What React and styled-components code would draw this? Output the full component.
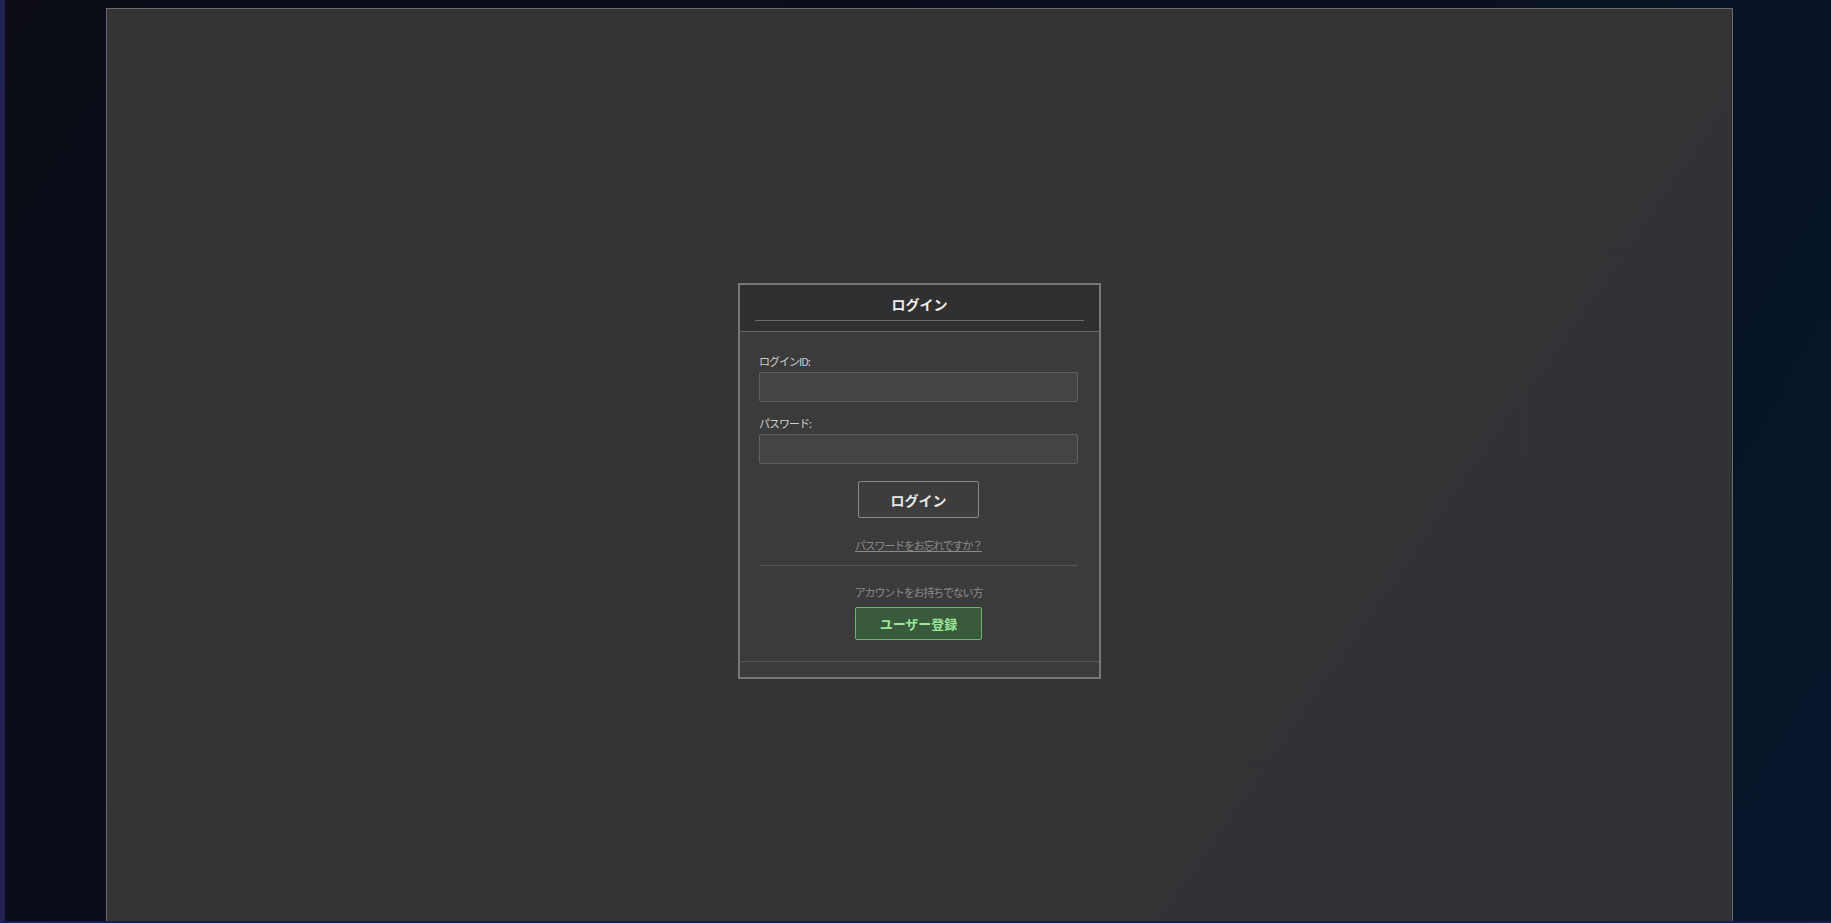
import React, {useState} from 'react';
import styled, {createGlobalStyle} from 'styled-components';

const GlobalStyle = createGlobalStyle`
    html, body {
        margin: 0;
        padding: 0;
        height: 100%;
    }
    body {
        font-family: "Noto Sans CJK JP", "Noto Sans", sans-serif;
        background: #0b0c16;
    }
    #root {
        height: 100%;
    }
`;

const Screen = styled.div`
    box-sizing: border-box;
    height: 923px;
    border-left: 5px solid #212156;
    border-bottom: 2px solid #1c1c4c;
    background: linear-gradient(120deg, #0b0c16 0%, #0a0f1e 50%, #06172b 100%);
    padding: 8px 0 0 101px;
    display: flex;
`;

const Panel = styled.main`
    box-sizing: border-box;
    width: 1627px;
    height: 913px;
    border: 1px solid #6a6a6a;
    border-bottom: none;
    background: linear-gradient(125deg, #343434 0%, #333333 45%, #303236 100%);
    display: flex;
    align-items: center;
    justify-content: center;
    padding-top: 32px;
`;

const Card = styled.section`
    width: 359px;
    border: 2px solid #777777;
    background: #3b3b3b;
    display: flex;
    flex-direction: column;
`;

const Header = styled.header`
    background: #303030;
    border-bottom: 1px solid #666666;
    padding: 0 15px 10px;
`;

const Title = styled.h1`
    margin: 0;
    height: 36px;
    box-sizing: border-box;
    padding-top: 9px;
    font-size: 14px;
    line-height: 20px;
    font-weight: bold;
    text-align: center;
    color: #eeeeee;
    border-bottom: 1px solid #6a6a6a;
`;

const Body = styled.form`
    padding: 21px 21px 21px 19px;
    display: flex;
    flex-direction: column;
`;

const Label = styled.label`
    font-size: 11px;
    line-height: 16px;
    color: #cfcfcf;
    margin-bottom: 3px;
    margin-top: ${p => p.$first ? '0' : '13px'};
    letter-spacing: -1px;
`;

const Input = styled.input`
    box-sizing: border-box;
    height: 30px;
    width: 100%;
    background: #444444;
    border: 1px solid #5f5f5f;
    border-radius: 2px;
    color: #eeeeee;
    padding: 4px 8px;
    font-size: 13px;
    outline: none;
`;

const Center = styled.div`
    display: flex;
    flex-direction: column;
    align-items: center;
`;

const Button = styled.button`
    box-sizing: border-box;
    font-family: inherit;
    font-weight: bold;
    cursor: pointer;
    border-radius: 2px;
    width: ${p => p.$register ? '127px' : '121px'};
    height: ${p => p.$register ? '33px' : '37px'};
    margin-top: ${p => p.$register ? '7px' : '17px'};
    font-size: ${p => p.$register ? '13px' : '14px'};
    background: ${p => p.$register ? '#3b5a3d' : '#3d3d3d'};
    border: 1px solid ${p => p.$register ? '#6db36d' : '#8a8a8a'};
    color: ${p => p.$register ? '#98e898' : '#e8e8e8'};
`;

const Forgot = styled.a`
    margin-top: 19px;
    font-size: 11px;
    line-height: 16px;
    color: #8a8a8a;
    text-decoration: underline;
    letter-spacing: -1.2px;
    cursor: pointer;
`;

const Divider = styled.hr`
    width: 100%;
    border: none;
    border-top: 1px solid #555555;
    margin: 12px 0 18px;
`;

const Note = styled.p`
    margin: 0;
    font-size: 11px;
    line-height: 16px;
    color: #8a8a8a;
    letter-spacing: -1.2px;
`;

const Footer = styled.footer`
    height: 15px;
    border-top: 1px solid #555555;
    background: #3b3b3b;
`;

export default function App() {
    const [loginId, setLoginId] = useState('');
    const [password, setPassword] = useState('');

    return (
        <>
            <GlobalStyle/>
            <Screen>
                <Panel>
                    <Card>
                        <Header>
                            <Title>ログイン</Title>
                        </Header>
                        <Body onSubmit={e => e.preventDefault()}>
                            <Label $first>ログインID:</Label>
                            <Input value={loginId} onChange={e => setLoginId(e.target.value)}/>
                            <Label>パスワード:</Label>
                            <Input type="password" value={password}
                                   onChange={e => setPassword(e.target.value)}/>
                            <Center>
                                <Button type="submit">ログイン</Button>
                                <Forgot>パスワードをお忘れですか？</Forgot>
                            </Center>
                            <Divider/>
                            <Center>
                                <Note>アカウントをお持ちでない方</Note>
                                <Button type="button" $register>ユーザー登録</Button>
                            </Center>
                        </Body>
                        <Footer/>
                    </Card>
                </Panel>
            </Screen>
        </>
    );
}
